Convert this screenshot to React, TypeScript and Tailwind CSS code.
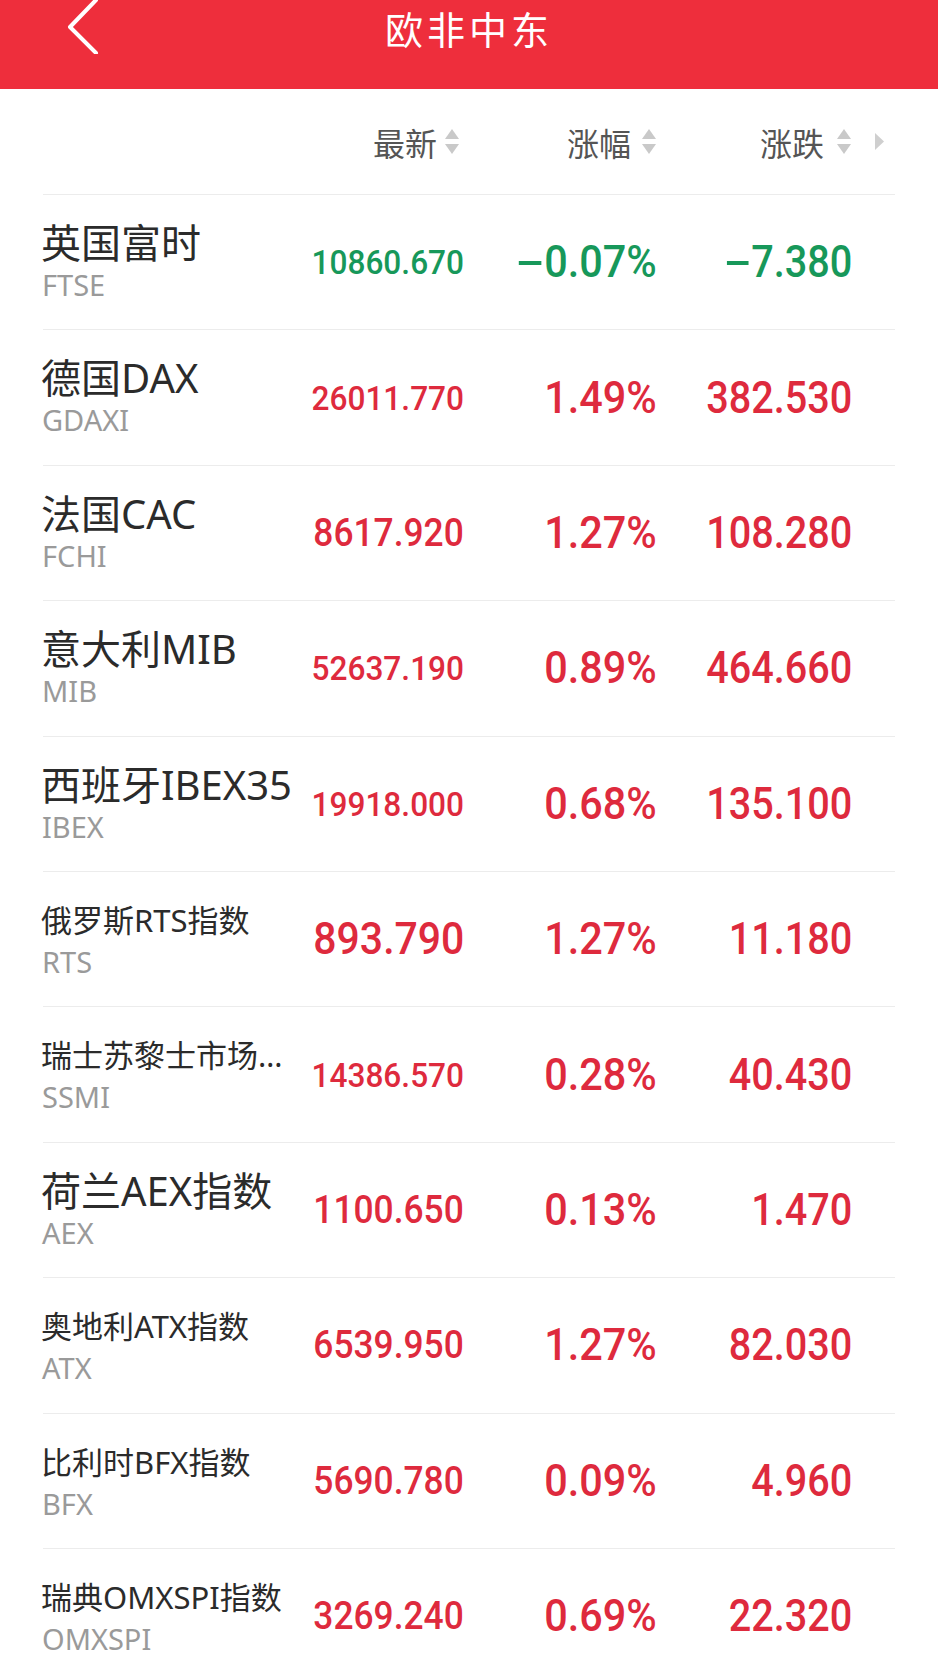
import React from "react";

type Row = {
  name: string;
  code: string;
  last: string;
  pct: string;
  chg: string;
  up: boolean;
  big: boolean;
};

const rows: Row[] = [
  { name: "英国富时", code: "FTSE", last: "10860.670", pct: "0.07%", chg: "7.380", up: false, big: true },
  { name: "德国DAX", code: "GDAXI", last: "26011.770", pct: "1.49%", chg: "382.530", up: true, big: true },
  { name: "法国CAC", code: "FCHI", last: "8617.920", pct: "1.27%", chg: "108.280", up: true, big: true },
  { name: "意大利MIB", code: "MIB", last: "52637.190", pct: "0.89%", chg: "464.660", up: true, big: true },
  { name: "西班牙IBEX35", code: "IBEX", last: "19918.000", pct: "0.68%", chg: "135.100", up: true, big: true },
  { name: "俄罗斯RTS指数", code: "RTS", last: "893.790", pct: "1.27%", chg: "11.180", up: true, big: false },
  { name: "瑞士苏黎士市场…", code: "SSMI", last: "14386.570", pct: "0.28%", chg: "40.430", up: true, big: false },
  { name: "荷兰AEX指数", code: "AEX", last: "1100.650", pct: "0.13%", chg: "1.470", up: true, big: true },
  { name: "奥地利ATX指数", code: "ATX", last: "6539.950", pct: "1.27%", chg: "82.030", up: true, big: false },
  { name: "比利时BFX指数", code: "BFX", last: "5690.780", pct: "0.09%", chg: "4.960", up: true, big: false },
  { name: "瑞典OMXSPI指数", code: "OMXSPI", last: "3269.240", pct: "0.69%", chg: "22.320", up: true, big: false },
];

const cjk = { fontFamily: '"Noto Sans CJK SC", "Noto Sans", sans-serif' };
const nameFont = { fontFamily: '"Noto Sans", "Noto Sans CJK SC", sans-serif' };
const num = { fontFamily: 'Roboto, "Noto Sans", sans-serif' };

function SortArrows() {
  return (
    <svg width="16" height="29" viewBox="0 0 16 29" className="shrink-0">
      <polygon points="8,2 15,12 1,12" fill="#c9c9c9" />
      <polygon points="1,17 15,17 8,27" fill="#c9c9c9" />
    </svg>
  );
}

function lastSize(s: string) {
  if (s.length >= 9) return "text-[34px]";
  if (s.length === 8) return "text-[38px]";
  return "text-[44px]";
}

function Minus() {
  return <span className="inline-block w-[24px] h-[4px] bg-current mr-[3px] align-middle relative top-[-3px]" />;
}

export default function App() {
  return (
    <div className="w-[938px] h-[1668px] overflow-hidden bg-white relative">
      {/* Header */}
      <div className="h-[89px] bg-[#ee2e3c] relative flex justify-center">
        <svg
          width="40"
          height="56"
          viewBox="0 0 40 56"
          className="absolute left-[62px] top-[-2px]"
        >
          <polyline
            points="34,2 8,29 34,55"
            fill="none"
            stroke="#ffffff"
            strokeWidth="4"
            strokeLinecap="round"
            strokeLinejoin="round"
          />
        </svg>
        <div
          className="pt-[3px] text-[38px] leading-[50px] text-white tracking-[4px]"
          style={cjk}
        >
          欧非中东
        </div>
      </div>

      <div className="mx-[43px]">
        {/* Column header */}
        <div className="grid grid-cols-[1fr_164px_193px_195px_43px] h-[106px] items-center border-b border-[#ececec]">
          <div />
          <div className="flex items-center justify-end gap-[7px] pr-[4px]">
            <span className="text-[32px] text-[#555555] leading-none" style={cjk}>最新</span>
            <SortArrows />
          </div>
          <div className="flex items-center justify-end gap-[10px]">
            <span className="text-[32px] text-[#555555] leading-none" style={cjk}>涨幅</span>
            <SortArrows />
          </div>
          <div className="flex items-center justify-end gap-[12px]">
            <span className="text-[32px] text-[#555555] leading-none" style={cjk}>涨跌</span>
            <SortArrows />
          </div>
          <div className="flex items-center pl-[22px]">
            <svg width="11" height="19" viewBox="0 0 11 19">
              <polygon points="1,1 10,9.5 1,18" fill="#cfcfcf" />
            </svg>
          </div>
        </div>

        {rows.map((r) => {
          const color = r.up ? "text-[#de2a3d]" : "text-[#17985a]";
          return (
            <div
              key={r.code}
              className="grid grid-cols-[1fr_164px_193px_195px_43px] h-[135.4px] border-b border-[#ececec]"
            >
              <div className="flex flex-col pt-[27px] min-w-0 -ml-[2px]">
                <div
                  className={`${r.big ? "text-[40px]" : "text-[31px]"} leading-[42px] text-[#2b2b2b] whitespace-nowrap`}
                  style={nameFont}
                >
                  {r.name}
                </div>
                <div className="text-[29px] leading-[34px] text-[#9a9a9a] mt-[4px] ml-[1px]" style={nameFont}>
                  {r.code}
                </div>
              </div>
              <div className="flex items-center justify-end">
                <span
                  className={`inline-block origin-right scale-x-[0.93] font-medium leading-none ${lastSize(r.last)} ${color}`}
                  style={num}
                >
                  {r.last}
                </span>
              </div>
              <div className="flex items-center justify-end">
                <span
                  className={`inline-block origin-right scale-x-[0.94] font-medium leading-none text-[44px] ${color}`}
                  style={num}
                >
                  {!r.up && <Minus />}
                  {r.pct}
                </span>
              </div>
              <div className="flex items-center justify-end">
                <span
                  className={`inline-block origin-right scale-x-[0.9] font-medium leading-none text-[44px] ${color}`}
                  style={num}
                >
                  {!r.up && <Minus />}
                  {r.chg}
                </span>
              </div>
              <div />
            </div>
          );
        })}
      </div>
    </div>
  );
}
